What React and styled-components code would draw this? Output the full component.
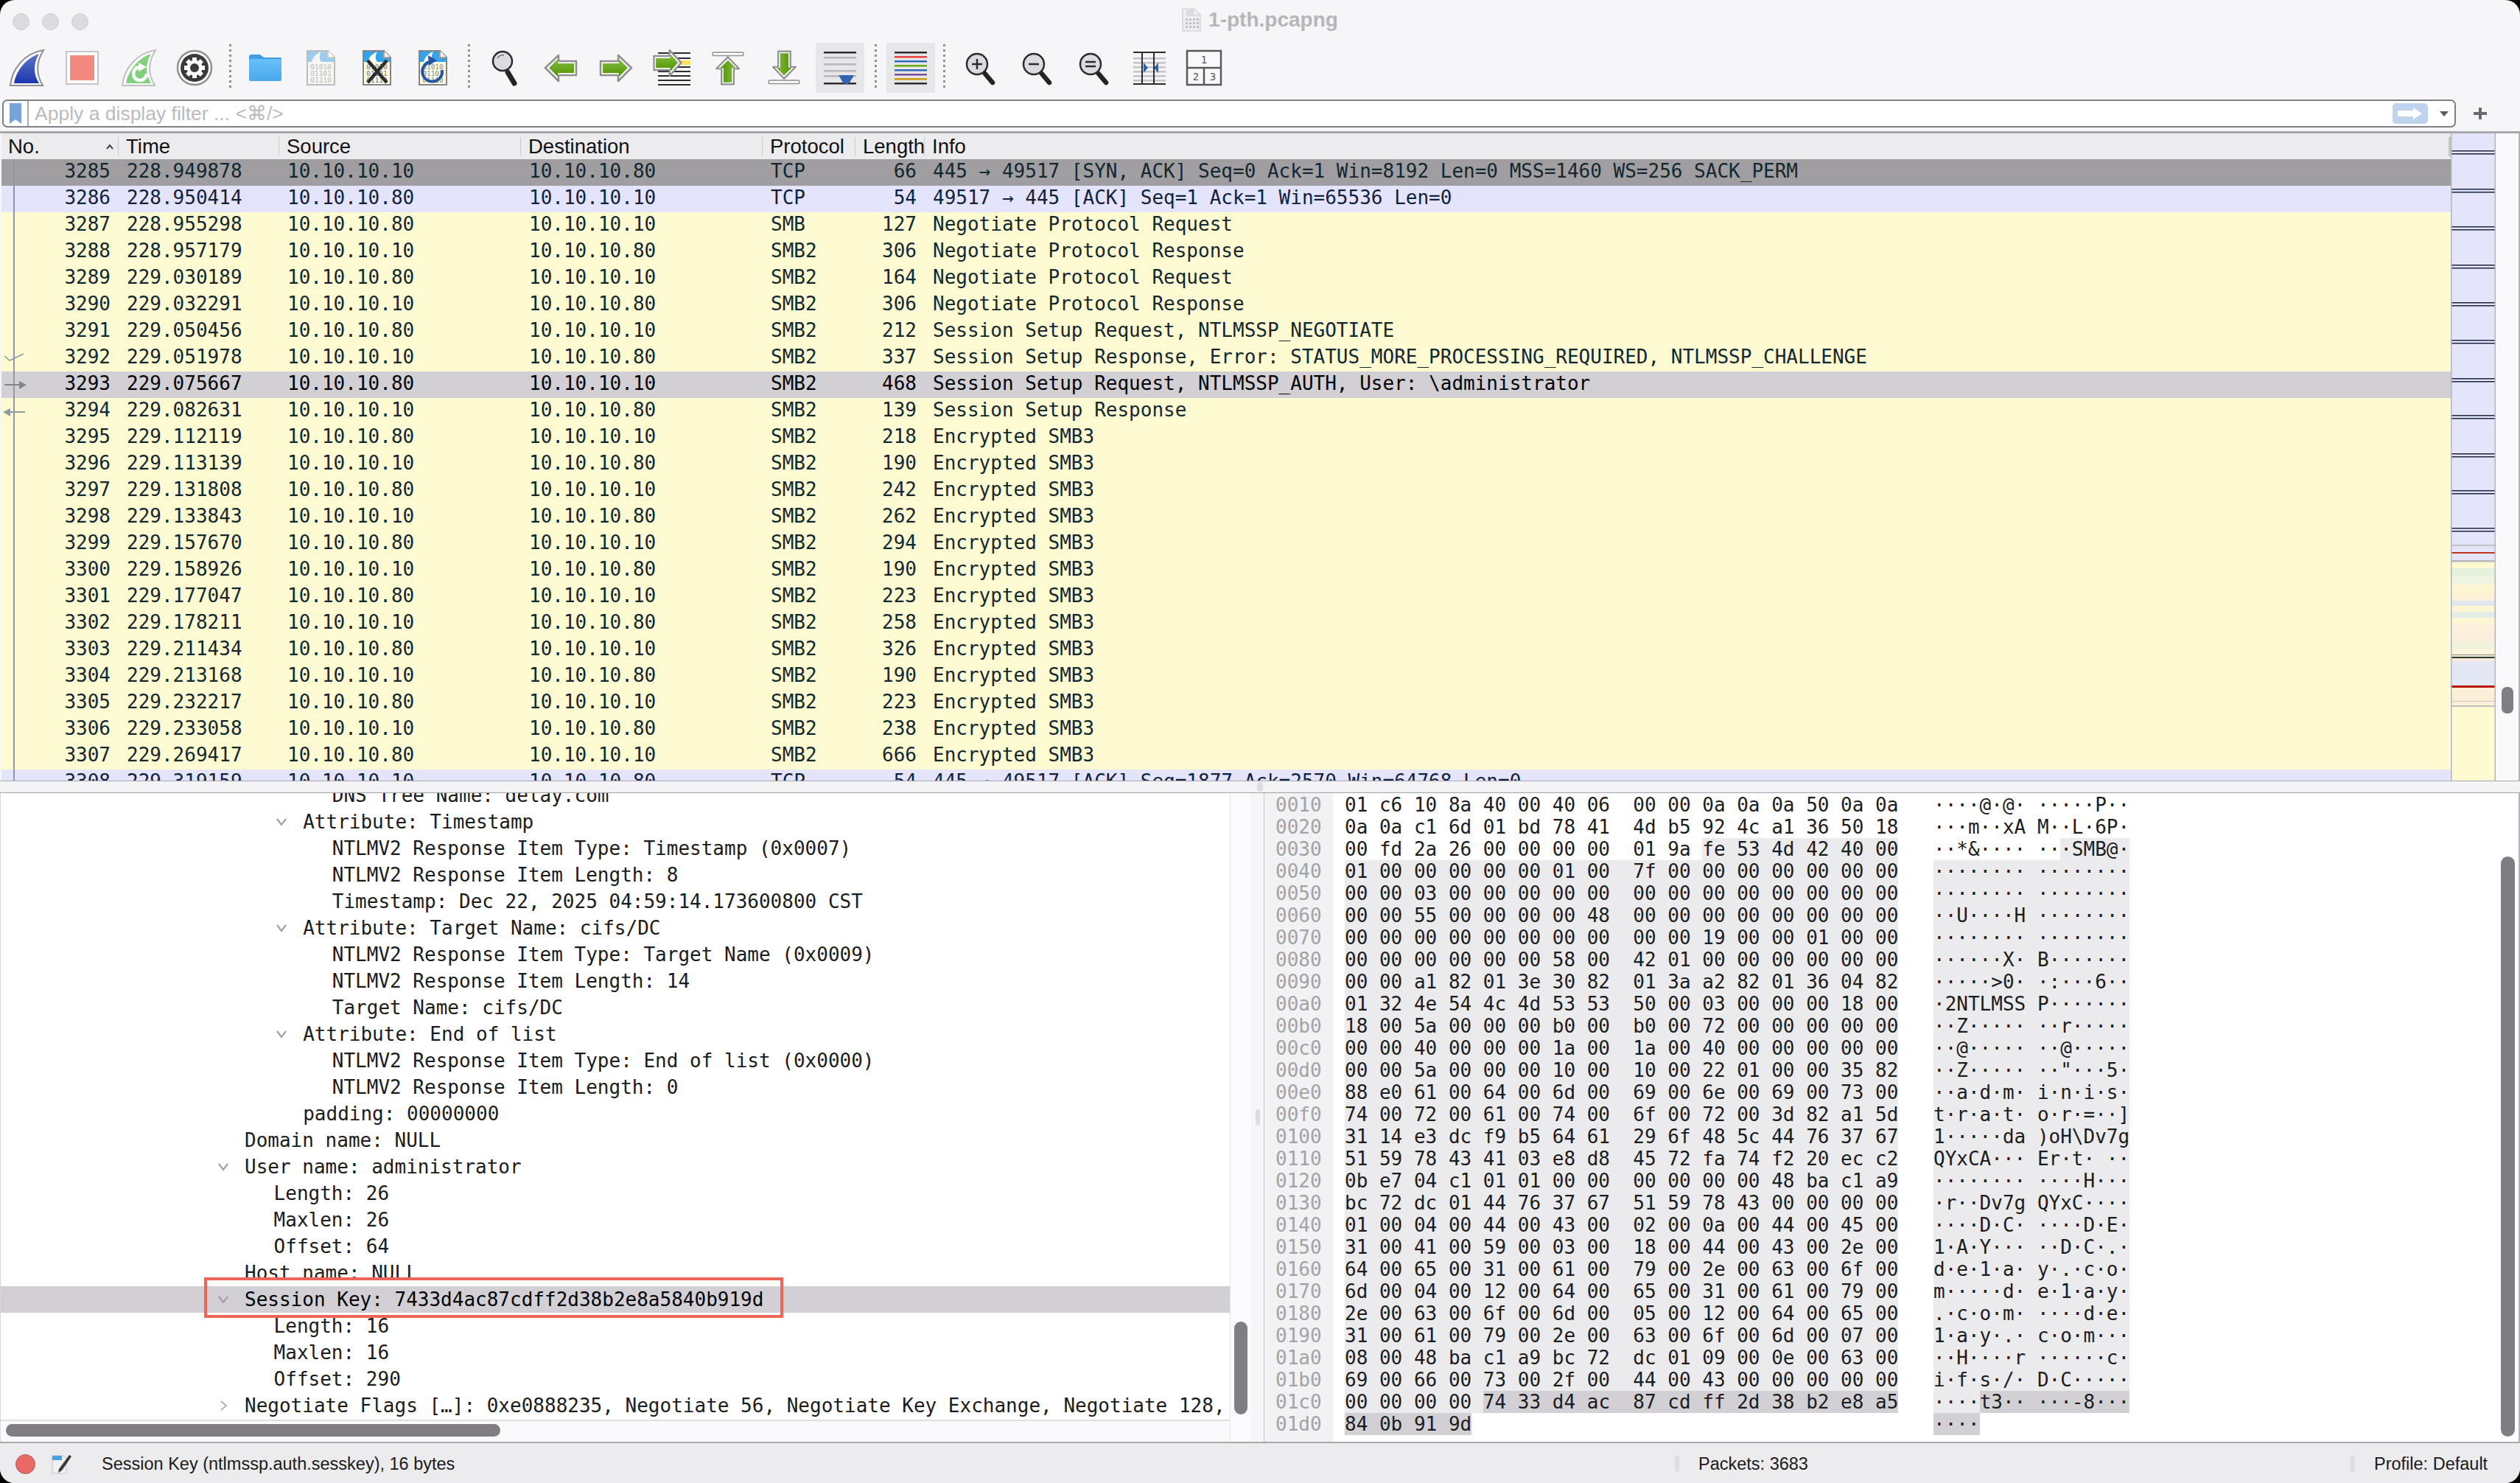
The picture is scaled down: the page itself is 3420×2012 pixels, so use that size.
import React from "react";
import styled, { createGlobalStyle } from "styled-components";

const MONO = '"DejaVu Sans Mono", "Liberation Mono", monospace';
const SANS = '"Liberation Sans", Arial, sans-serif';

const GlobalStyle = createGlobalStyle`
  html, body { margin: 0; padding: 0; background: #000; }
  body { width: 3420px; height: 2012px; overflow: hidden; }
`;

const Window = styled.div`
  position: relative;
  width: 3420px;
  height: 2012px;
  display: flex;
  flex-direction: column;
  background: #f6f5f8;
  border-radius: 20px;
  overflow: hidden;
  font-family: ${SANS};
`;

const TitleBar = styled.div`
  height: 58px;
  flex: none;
  display: grid;
  grid-template-columns: 1fr auto 1fr;
  align-items: center;
`;
const Lights = styled.div`
  display: flex;
  gap: 17px;
  padding-left: 17px;
`;
const Light = styled.span`
  width: 23px;
  height: 23px;
  border-radius: 50%;
  background: #dcdbdd;
  border: 1px solid #cfced1;
  box-sizing: border-box;
`;
const Title = styled.div`
  display: flex;
  align-items: center;
  gap: 10px;
  font-size: 28px;
  font-weight: bold;
  color: #b6b5b8;
  margin-top: -4px;
`;

const Toolbar = styled.div`
  height: 68px;
  flex: none;
  display: flex;
  gap: 10px;
  padding-left: 3px;
`;
const ToolSlot = styled.div`
  width: 66px;
  height: 68px;
  flex: none;
  background: ${(p) => (p.$active ? "#e7e6e9" : "transparent")};
  svg { display: block; }
`;
const ToolSep = styled.div`
  width: ${(p) => (p.$narrow ? "4px" : "10px")};
  flex: none;
  margin: 2px 0 4px;
  background: repeating-linear-gradient(#8f8e92 0 3px, transparent 3px 7px) center / 3px 100% no-repeat;
`;
const ZoomGroup = styled.div`
  display: flex;
  gap: 11px;
`;

const FilterRow = styled.div`
  height: 38px;
  flex: none;
  margin-top: 9px;
  padding-left: 3px;
  display: flex;
  align-items: center;
`;
const FilterBox = styled.div`
  width: 3330px;
  height: 38px;
  box-sizing: border-box;
  border: 2px solid #807f83;
  border-radius: 7px;
  background: #fff;
  display: flex;
  align-items: center;
`;
const BookmarkCell = styled.div`
  width: 34px;
  height: 100%;
  flex: none;
  box-sizing: border-box;
  border-right: 2px solid #a9a8ac;
  display: flex;
  align-items: center;
  justify-content: center;
`;
const Placeholder = styled.div`
  flex: 1;
  padding-left: 8px;
  font-size: 26.5px;
  color: #bbbabd;
`;
const ApplyButton = styled.div`
  width: 48px;
  height: 28px;
  border-radius: 5px;
  background: #bdd3ee;
  display: flex;
  align-items: center;
  justify-content: center;
`;
const DropArrow = styled.div`
  width: 0;
  height: 0;
  margin: 0 8px 0 16px;
  border-left: 6px solid transparent;
  border-right: 6px solid transparent;
  border-top: 7px solid #5b5a5e;
`;
const PlusCell = styled.div`
  width: 66px;
  display: flex;
  justify-content: center;
`;

const PacketPane = styled.div`
  margin-top: 5px;
  height: 882px;
  flex: none;
  box-sizing: border-box;
  border-top: 3px solid #a9a8ac;
  border-bottom: 1px solid #a9a8ac;
  border-right: 2px solid #b4b3b7;
  padding-left: 2px;
  display: flex;
`;
const PacketTable = styled.div`
  width: 3324px;
  flex: none;
  display: flex;
  flex-direction: column;
  overflow: hidden;
`;
const COLUMNS = "159px 218px 328px 328px 126px 94px 1fr";
const HeaderRow = styled.div`
  height: 35px;
  flex: none;
  display: grid;
  grid-template-columns: ${COLUMNS};
  background: #ecebed;
  font-size: 27.5px;
  color: #111;
`;
const HeaderCell = styled.div`
  line-height: 35px;
  padding-left: ${(p) => (p.$first ? "9px" : "10px")};
  padding-right: 6px;
  background: linear-gradient(#c9c8cc, #c9c8cc) right center / 1.5px 25px no-repeat;
  white-space: nowrap;
  overflow: ${(p) => (p.$clip ? "hidden" : "visible")};
  display: flex;
  justify-content: space-between;
  align-items: center;
  &:last-child { background: linear-gradient(#c5c4c7, #c5c4c7) right center / 3px 26px no-repeat; }
`;
const RowList = styled.div`
  position: relative;
  flex: 1;
  overflow: hidden;
`;
const ROW_BG = { gray: "#a09ea1", blue: "#e4e5fd", yellow: "#fefad2", selected: "#d2d0d5" };
const ROW_FG = { gray: "#12272e", blue: "#12213d", yellow: "#12272e", selected: "#000" };
const PacketRow = styled.div`
  height: 36px;
  display: grid;
  grid-template-columns: ${COLUMNS};
  line-height: 32px;
  font-family: ${MONO};
  font-size: 26px;
  white-space: pre;
  background: ${(p) => ROW_BG[p.$kind]};
  color: ${(p) => ROW_FG[p.$kind]};
`;
const Cell = styled.div`
  padding: 0 11px;
  text-align: ${(p) => (p.$right ? "right" : "left")};
`;
const RelationMarks = styled.svg`
  position: absolute;
  left: 0;
  top: 0;
`;
const MiniMap = styled.svg`
  width: 61px;
  height: 878px;
  flex: none;
  display: block;
`;
const SideTrack = styled.div`
  flex: 1;
  background: #faf9fc;
  padding: 751px 0 0 8px;
`;
const SideThumb = styled.div`
  width: 16px;
  height: 36px;
  border-radius: 7px;
  background: #807e82;
`;

const HSplitter = styled.div`
  height: 15px;
  flex: none;
  background: #f4f3f6;
  border-bottom: 1px solid #a3a2a6;
  display: flex;
  justify-content: center;
  align-items: center;
`;
const Grip = styled.span`
  width: ${(p) => (p.$small ? "6px" : "8px")};
  height: ${(p) => (p.$small ? "22px" : "13px")};
  border-radius: 4px;
  background: #dddce0;
`;

const LowerArea = styled.div`
  height: 880px;
  flex: none;
  display: flex;
`;
const DetailColumn = styled.div`
  width: 1669px;
  flex: none;
  display: flex;
  flex-direction: column;
  background: #fff;
  border-left: 1px solid #d8d7da;
  box-sizing: border-box;
`;
const DetailTree = styled.div`
  height: 850px;
  flex: none;
  overflow: hidden;
`;
const TreeScroll = styled.div`
  margin-top: -15px;
  font-family: ${MONO};
  font-size: 26px;
  color: #1b1b1b;
  white-space: pre;
`;
const TreeRow = styled.div`
  height: 36px;
  display: flex;
  align-items: center;
  padding-left: ${(p) => 292 + p.$level * 39.6}px;
  background: ${(p) => (p.$selected ? "#d2d0d5" : "transparent")};
  color: ${(p) => (p.$selected ? "#000" : "inherit")};
`;
const ChevronSlot = styled.span`
  width: 20px;
  margin-right: 19px;
  flex: none;
  display: flex;
  justify-content: center;
  align-items: center;
`;
const HScroll = styled.div`
  flex: 1;
  border-top: 2px solid #dfdee1;
  background: #faf9fb;
  padding: 4px 0 0 7px;
`;
const HThumb = styled.div`
  width: 671px;
  height: 17px;
  border-radius: 9px;
  background: #807e82;
`;
const VTrack = styled.div`
  width: 29px;
  flex: none;
  box-sizing: border-box;
  background: #fbfafc;
  border-left: 1px solid #e4e3e6;
  padding: 717px 0 0 5px;
`;
const VThumb = styled.div`
  width: 18px;
  height: 126px;
  border-radius: 9px;
  background: #807e82;
`;
const VSplitter = styled.div`
  width: 17px;
  flex: none;
  display: flex;
  align-items: center;
  justify-content: center;
`;

const BytesPane = styled.div`
  flex: 1;
  display: flex;
  background: #fff;
  border-left: 1px solid #c4c3c7;
  border-right: 2px solid #b4b3b7;
  font-family: ${MONO};
  font-size: 26px;
  line-height: 30px;
  white-space: pre;
  color: #1c1c1c;
`;
const Gutter = styled.div`
  width: 93px;
  flex: none;
  box-sizing: border-box;
  padding: 1px 0 0 15px;
  background: #f2f1f3;
  color: #a3a2a5;
`;
const HexColumn = styled.div`
  width: 815px;
  flex: none;
  box-sizing: border-box;
  padding: 1px 0 0 16px;
`;
const AsciiColumn = styled.div`
  flex: 1;
  padding-top: 1px;
`;
const ByteLine = styled.div`
  height: 30px;
`;
const ByteMark = styled.span`
  display: inline-block;
  height: 30px;
  background: ${(p) => (p.$level === 2 ? "#d2d0d5" : p.$level === 1 ? "#ebeaed" : "transparent")};
`;
const ByteScroll = styled.div`
  width: 30px;
  flex: none;
  box-sizing: border-box;
  padding: 86px 0 0 6px;
`;
const ByteThumb = styled.div`
  width: 19px;
  height: 787px;
  border-radius: 10px;
  background: #807e82;
`;

const StatusBar = styled.div`
  flex: 1;
  border-top: 2px solid #a9a8ac;
  background: #ecebed;
  display: flex;
  align-items: center;
  font-size: 23.5px;
  color: #1a1a1a;
  padding-left: 21px;
  padding-top: 2px;
`;
const StatusDot = styled.span`
  width: 27px;
  height: 27px;
  flex: none;
  box-sizing: border-box;
  border-radius: 50%;
  background: #e86a64;
  border: 1.5px solid #b4544e;
  margin-right: 22px;
`;
const StatusMessage = styled.span`
  width: 2135px;
  flex: none;
  margin-left: 40px;
`;
const StatusCell = styled.span`
  width: ${(p) => p.$width}px;
  flex: none;
  margin-left: 26px;
  white-space: nowrap;
`;

const Callout = styled.div`
  position: absolute;
  left: 277px;
  top: 1733px;
  width: 786px;
  height: 55px;
  box-sizing: border-box;
  border: 4px solid #f0655a;
`;

// packet list data
const enc = (no, time, even, len) => ({
  no, time, even, proto: "SMB2", len, info: "Encrypted SMB3",
});
const PACKETS = [
  { no: 3285, time: "228.949878", even: false, proto: "TCP", len: 66, info: "445 → 49517 [SYN, ACK] Seq=0 Ack=1 Win=8192 Len=0 MSS=1460 WS=256 SACK_PERM", kind: "gray" },
  { no: 3286, time: "228.950414", even: true, proto: "TCP", len: 54, info: "49517 → 445 [ACK] Seq=1 Ack=1 Win=65536 Len=0", kind: "blue" },
  { no: 3287, time: "228.955298", even: true, proto: "SMB", len: 127, info: "Negotiate Protocol Request" },
  { no: 3288, time: "228.957179", even: false, proto: "SMB2", len: 306, info: "Negotiate Protocol Response" },
  { no: 3289, time: "229.030189", even: true, proto: "SMB2", len: 164, info: "Negotiate Protocol Request" },
  { no: 3290, time: "229.032291", even: false, proto: "SMB2", len: 306, info: "Negotiate Protocol Response" },
  { no: 3291, time: "229.050456", even: true, proto: "SMB2", len: 212, info: "Session Setup Request, NTLMSSP_NEGOTIATE" },
  { no: 3292, time: "229.051978", even: false, proto: "SMB2", len: 337, info: "Session Setup Response, Error: STATUS_MORE_PROCESSING_REQUIRED, NTLMSSP_CHALLENGE" },
  { no: 3293, time: "229.075667", even: true, proto: "SMB2", len: 468, info: "Session Setup Request, NTLMSSP_AUTH, User: \\administrator", kind: "selected" },
  { no: 3294, time: "229.082631", even: false, proto: "SMB2", len: 139, info: "Session Setup Response" },
  enc(3295, "229.112119", true, 218),
  enc(3296, "229.113139", false, 190),
  enc(3297, "229.131808", true, 242),
  enc(3298, "229.133843", false, 262),
  enc(3299, "229.157670", true, 294),
  enc(3300, "229.158926", false, 190),
  enc(3301, "229.177047", true, 223),
  enc(3302, "229.178211", false, 258),
  enc(3303, "229.211434", true, 326),
  enc(3304, "229.213168", false, 190),
  enc(3305, "229.232217", true, 223),
  enc(3306, "229.233058", false, 238),
  enc(3307, "229.269417", true, 666),
  { no: 3308, time: "229.319159", even: false, proto: "TCP", len: 54, info: "445 → 49517 [ACK] Seq=1877 Ack=2570 Win=64768 Len=0", kind: "blue" },
];

const TREE = [
  [3, "DNS Tree Name: delay.com"],
  [2, "Attribute: Timestamp", "open"],
  [3, "NTLMV2 Response Item Type: Timestamp (0x0007)"],
  [3, "NTLMV2 Response Item Length: 8"],
  [3, "Timestamp: Dec 22, 2025 04:59:14.173600800 CST"],
  [2, "Attribute: Target Name: cifs/DC", "open"],
  [3, "NTLMV2 Response Item Type: Target Name (0x0009)"],
  [3, "NTLMV2 Response Item Length: 14"],
  [3, "Target Name: cifs/DC"],
  [2, "Attribute: End of list", "open"],
  [3, "NTLMV2 Response Item Type: End of list (0x0000)"],
  [3, "NTLMV2 Response Item Length: 0"],
  [2, "padding: 00000000"],
  [0, "Domain name: NULL"],
  [0, "User name: administrator", "open"],
  [1, "Length: 26"],
  [1, "Maxlen: 26"],
  [1, "Offset: 64"],
  [0, "Host name: NULL"],
  [0, "Session Key: 7433d4ac87cdff2d38b2e8a5840b919d", "open", true],
  [1, "Length: 16"],
  [1, "Maxlen: 16"],
  [1, "Offset: 290"],
  [0, "Negotiate Flags […]: 0xe0888235, Negotiate 56, Negotiate Key Exchange, Negotiate 128,", "closed"],
];

const HEX = `01 c6 10 8a 40 00 40 06 00 00 0a 0a 0a 50 0a 0a
0a 0a c1 6d 01 bd 78 41 4d b5 92 4c a1 36 50 18
00 fd 2a 26 00 00 00 00 01 9a fe 53 4d 42 40 00
01 00 00 00 00 00 01 00 7f 00 00 00 00 00 00 00
00 00 03 00 00 00 00 00 00 00 00 00 00 00 00 00
00 00 55 00 00 00 00 48 00 00 00 00 00 00 00 00
00 00 00 00 00 00 00 00 00 00 19 00 00 01 00 00
00 00 00 00 00 00 58 00 42 01 00 00 00 00 00 00
00 00 a1 82 01 3e 30 82 01 3a a2 82 01 36 04 82
01 32 4e 54 4c 4d 53 53 50 00 03 00 00 00 18 00
18 00 5a 00 00 00 b0 00 b0 00 72 00 00 00 00 00
00 00 40 00 00 00 1a 00 1a 00 40 00 00 00 00 00
00 00 5a 00 00 00 10 00 10 00 22 01 00 00 35 82
88 e0 61 00 64 00 6d 00 69 00 6e 00 69 00 73 00
74 00 72 00 61 00 74 00 6f 00 72 00 3d 82 a1 5d
31 14 e3 dc f9 b5 64 61 29 6f 48 5c 44 76 37 67
51 59 78 43 41 03 e8 d8 45 72 fa 74 f2 20 ec c2
0b e7 04 c1 01 01 00 00 00 00 00 00 48 ba c1 a9
bc 72 dc 01 44 76 37 67 51 59 78 43 00 00 00 00
01 00 04 00 44 00 43 00 02 00 0a 00 44 00 45 00
31 00 41 00 59 00 03 00 18 00 44 00 43 00 2e 00
64 00 65 00 31 00 61 00 79 00 2e 00 63 00 6f 00
6d 00 04 00 12 00 64 00 65 00 31 00 61 00 79 00
2e 00 63 00 6f 00 6d 00 05 00 12 00 64 00 65 00
31 00 61 00 79 00 2e 00 63 00 6f 00 6d 00 07 00
08 00 48 ba c1 a9 bc 72 dc 01 09 00 0e 00 63 00
69 00 66 00 73 00 2f 00 44 00 43 00 00 00 00 00
00 00 00 00 74 33 d4 ac 87 cd ff 2d 38 b2 e8 a5
84 0b 91 9d`.split("\n").map((l) => l.split(" "));

const levelOf = (offset) => (offset >= 0x1c4 ? 2 : offset >= 0x3a ? 1 : 0);

function toAscii(b) {
  const n = parseInt(b, 16);
  return n >= 32 && n < 127 ? String.fromCharCode(n) : "·";
}

// groups the bytes of one line in runs with the same highlight
function ByteRun({ bytes, line, format, sep }) {
  const runs = [];
  bytes.forEach((b, i) => {
    const level = levelOf((line + 1) * 16 + i);
    const tail = i === bytes.length - 1 ? "" : i === 7 ? sep + " " : sep;
    const text = format(b) + tail;
    const last = runs[runs.length - 1];
    if (last && last.level === level) last.text += text;
    else runs.push({ level, text });
  });
  return (
    <ByteLine>
      {runs.map((r, i) => (
        <ByteMark key={i} $level={r.level}>{r.text}</ByteMark>
      ))}
    </ByteLine>
  );
}

function Chevron({ open }) {
  return (
    <svg width="16" height="14" viewBox="0 0 16 14">
      {open ? (
        <path d="M2 3 L8 11 L14 3" fill="none" stroke="#a09fa3" strokeWidth="2.2" />
      ) : (
        <path d="M5 1 L12 7 L5 13" fill="none" stroke="#b5b4b8" strokeWidth="2.2" />
      )}
    </svg>
  );
}

const Svg = ({ children }) => (
  <svg width="66" height="68" viewBox="0 0 66 68">{children}</svg>
);

const FIN = "M11 58 C13 36 30 14 56 10 C46 26 46 43 55 58 Z";
const FIN_IN = "M16 55 C19 38 32 21 50 15 C42 28 42 43 50 55 Z";

const FinStart = () => (
  <Svg>
    <defs>
      <linearGradient id="finBlue" x1="0" y1="0" x2="0" y2="1">
        <stop offset="0" stopColor="#5d74c9" />
        <stop offset="1" stopColor="#1c38b0" />
      </linearGradient>
    </defs>
    <path d={FIN} fill="#fff" stroke="#8f8e92" strokeWidth="2" />
    <path d={FIN_IN} fill="url(#finBlue)" />
  </Svg>
);

const StopIcon = () => (
  <Svg>
    <rect x="11" y="12" width="43" height="44" fill="#fff" stroke="#c8c3c5" strokeWidth="2" />
    <rect x="16" y="17" width="33" height="34" fill="#f28a80" />
  </Svg>
);

const FinRestart = () => (
  <Svg>
    <path d={FIN} fill="#fff" stroke="#c0bfc2" strokeWidth="2" />
    <path d={FIN_IN} fill="#80d07c" />
    <path d="M35 33 A9 9 0 1 0 44 42" fill="none" stroke="#fff" strokeWidth="4.5" />
    <path d="M33 27 L44 33 L33 39 Z" fill="#fff" />
  </Svg>
);

const OptionsIcon = () => {
  const teeth = [0, 45, 90, 135, 180, 225, 270, 315];
  return (
    <Svg>
      <circle cx="33" cy="34" r="23" fill="#fff" stroke="#8f8e92" strokeWidth="2.5" />
      <circle cx="33" cy="34" r="19" fill="#3b393c" />
      <circle cx="33" cy="34" r="10.5" fill="#fff" />
      {teeth.map((a) => (
        <rect key={a} x="30" y="20" width="6" height="6" fill="#fff" transform={`rotate(${a} 33 34)`} />
      ))}
      <circle cx="33" cy="34" r="6" fill="#3b393c" />
    </Svg>
  );
};

const FolderIcon = () => (
  <Svg>
    <defs>
      <linearGradient id="folderBlue" x1="0" y1="0" x2="0" y2="1">
        <stop offset="0" stopColor="#68c0f8" />
        <stop offset="1" stopColor="#4aa8ec" />
      </linearGradient>
    </defs>
    <path d="M11 19 Q11 16 14 16 L26 16 L31 20 L53 20 Q55 20 55 23 L55 28 L11 28 Z" fill="#3f9fe6" />
    <rect x="11" y="22" width="44" height="30" rx="2" fill="url(#folderBlue)" />
  </Svg>
);

function DocIcon({ border, fill, top, finFill, digits, children }) {
  return (
    <Svg>
      <path d="M14 11 L42 11 L51 20 L51 57 L14 57 Z" fill={fill} stroke={border} strokeWidth="2" />
      <path d="M15 12 L41 12 L41 21 L50 21 L50 26 L15 26 Z" fill={top} />
      <path d="M20 26 C22 18 28 14 33 12 C30 17 30 22 33 26 Z" fill={finFill} />
      <path d="M42 11 L42 20 L51 20" fill="#fff" stroke={border} strokeWidth="1.5" />
      <g fontFamily={MONO} fontSize="9.5" fill={digits} textAnchor="middle">
        <text x="32.5" y="36">01010</text>
        <text x="32.5" y="45">01101</text>
        <text x="32.5" y="54">01110</text>
      </g>
      {children}
    </Svg>
  );
}

const ArrowShape = ({ transform, id }) => (
  <g transform={transform}>
    <defs>
      <linearGradient id={id} x1="0" y1="0" x2="0" y2="1">
        <stop offset="0" stopColor="#86bb45" />
        <stop offset="1" stopColor="#4f9400" />
      </linearGradient>
    </defs>
    <path d="M13 34 L31 17 L31 25 L55 25 L55 44 L31 44 L31 52 Z" fill="#fff" stroke="#8f8e92" strokeWidth="2.5" strokeLinejoin="round" />
    <path d="M18 34 L30 22 L30 28 L52 28 L52 41 L30 41 L30 46 Z" fill={`url(#${id})`} />
  </g>
);

const FindIcon = () => (
  <Svg>
    <line x1="38" y1="40" x2="47" y2="55" stroke="#242325" strokeWidth="7" strokeLinecap="round" />
    <circle cx="31" cy="25" r="13" fill="#dcdbe0" stroke="#2b2a2c" strokeWidth="2.5" />
    <path d="M24 21 Q27 16 33 17" fill="none" stroke="#77767a" strokeWidth="1.5" />
  </Svg>
);

const GoPacketIcon = () => (
  <Svg>
    {[14, 21, 33, 39, 45, 51, 57].map((y) => (
      <rect key={y} x="14" y={y - 1} width="44" height="2" fill="#2c2b2d" />
    ))}
    <rect x="14" y="24" width="44" height="6" fill="#fde25d" />
    <ArrowShape id="arrowGo" transform="translate(56 0) scale(-0.88 1) translate(-1 -7)" />
  </Svg>
);

const LineStack = ({ colors }) => (
  <>
    {colors.map(([y, c]) => (
      <rect key={y} x="11" y={y - 1} width="44" height="2.5" fill={c} />
    ))}
  </>
);

const AutoScrollIcon = () => (
  <Svg>
    <LineStack colors={[[13, "#2c2b2d"], [20, "#b7b6ba"], [29, "#b7b6ba"], [38, "#b7b6ba"], [45, "#b7b6ba"], [55, "#2c2b2d"]]} />
    <path d="M31 44 L52 44 L46 54 Q42 58 37 54 Z" fill="#2f63ae" />
  </Svg>
);

const ColorizeIcon = () => (
  <Svg>
    <LineStack colors={[[13, "#2c2b2d"], [19, "#e8413a"], [25, "#2f6bb5"], [31, "#6aa80e"], [37, "#2f6bb5"], [43, "#7a4f96"], [49, "#c99a0a"], [55, "#2c2b2d"]]} />
  </Svg>
);

function ZoomIcon({ children }) {
  return (
    <Svg>
      <line x1="43" y1="41" x2="54" y2="54" stroke="#242325" strokeWidth="6.5" strokeLinecap="round" />
      <circle cx="33" cy="29" r="14" fill="#dcdbe0" stroke="#2b2a2c" strokeWidth="2.5" />
      {children}
    </Svg>
  );
}

const ResizeIcon = () => (
  <Svg>
    {[20, 26, 32, 38, 44, 50].map((y) => (
      <rect key={y} x="14" y={y} width="44" height="2.5" fill="#c4c3c7" />
    ))}
    <rect x="14" y="12" width="44" height="2" fill="#2c2b2d" />
    <rect x="14" y="55" width="44" height="2" fill="#2c2b2d" />
    <rect x="25" y="12" width="2" height="45" fill="#2c2b2d" />
    <rect x="41" y="12" width="2" height="45" fill="#2c2b2d" />
    <path d="M28 27 L34 34 L28 41 Z" fill="#2f63ae" />
    <path d="M48 27 L42 34 L48 41 Z" fill="#2f63ae" />
  </Svg>
);

const LayoutIcon = () => (
  <Svg>
    <rect x="10" y="11" width="46" height="46" fill="#f9f8fb" stroke="#59585c" strokeWidth="2.5" />
    <line x1="10" y1="34" x2="56" y2="34" stroke="#59585c" strokeWidth="2.5" />
    <line x1="33" y1="34" x2="33" y2="57" stroke="#59585c" strokeWidth="2.5" />
    <g fontFamily={MONO} fontSize="14" fill="#59585c" textAnchor="middle">
      <text x="33" y="28">1</text>
      <text x="22" y="51">2</text>
      <text x="45" y="51">3</text>
    </g>
  </Svg>
);

const TitleFile = () => (
  <svg width="26" height="32" viewBox="0 0 26 32">
    <path d="M1 1 L17 1 L25 9 L25 31 L1 31 Z" fill="#eeedf0" stroke="#d6d5d8" strokeWidth="1.5" />
    <path d="M6 1 L16 1 L16 9 L25 9 L25 11 L6 11 Z" fill="#dcdbde" />
    <g fill="#c0bfc2">
      {[14, 19, 24].map((y) => [5, 10, 15, 20].map((x) => (
        <rect key={`${x}-${y}`} x={x} y={y} width="3" height="3" />
      )))}
    </g>
  </svg>
);

// packet overview on the right of the list, drawn at scale
const MAP_DOUBLE = [23, 75, 126, 178, 229, 280, 332, 382, 434, 484, 535];
const MAP_BANDS = [
  [590, 10, "#e4f1dc"], [600, 12, "#eef3e2"], [612, 14, "#fdf5d2"], [626, 8, "#fdf0d8"],
  [634, 7, "#dfe7ee"], [641, 8, "#fdf6d4"], [649, 8, "#e4ecea"], [657, 8, "#fdf6d4"],
  [665, 12, "#fdf0dc"], [677, 12, "#fbeedd"], [689, 10, "#eff3dc"], [699, 10, "#fcf4da"],
  [709, 7, "#fde9d8"],
];

const MapChart = () => (
  <MiniMap viewBox="0 0 61 878">
    <rect width="61" height="878" fill="#e4e5fb" />
    <rect y="581" width="61" height="297" fill="#fefad2" />
    {MAP_BANDS.map(([y, h, c]) => <rect key={y} y={y} width="61" height={h} fill={c} />)}
    <rect y="716" width="61" height="34" fill="#e4e8f4" />
    <rect y="750" width="61" height="26" fill="#fdeed8" />
    {MAP_DOUBLE.map((y) => (
      <g key={y}>
        <rect y={y} width="61" height="1.5" fill="#1c2540" />
        <rect y={y + 4} width="61" height="1.5" fill="#1c2540" />
      </g>
    ))}
    <rect y="558" width="61" height="1.5" fill="#b7b6ba" />
    <rect y="568" width="61" height="2" fill="#c03020" />
    <rect y="579" width="61" height="2.5" fill="#b7b6ba" />
    <rect y="707" width="61" height="1" fill="#7a8a80" />
    <rect y="710" width="61" height="2" fill="#1e3c30" />
    <rect y="749" width="61" height="3" fill="#b8140a" />
    <rect y="770" width="61" height="1" fill="#c8c7cb" />
    <rect y="776" width="61" height="2" fill="#c0bfc3" />
    <rect width="1.5" height="878" fill="#b5b4b8" />
    <rect x="59.5" width="1.5" height="878" fill="#b5b4b8" />
  </MiniMap>
);

export default function App() {
  return (
    <Window>
      <GlobalStyle />
      <TitleBar>
        <Lights>
          <Light />
          <Light />
          <Light />
        </Lights>
        <Title>
          <TitleFile />
          1-pth.pcapng
        </Title>
        <span />
      </TitleBar>

      <Toolbar>
        <ToolSlot><FinStart /></ToolSlot>
        <ToolSlot><StopIcon /></ToolSlot>
        <ToolSlot><FinRestart /></ToolSlot>
        <ToolSlot><OptionsIcon /></ToolSlot>
        <ToolSep />
        <ToolSlot><FolderIcon /></ToolSlot>
        <ToolSlot>
          <DocIcon border="#bdbcbf" fill="#f7f6f0" top="#9ccdf0" finFill="#f7f6f0" digits="#bcbbbd" />
        </ToolSlot>
        <ToolSlot>
          <DocIcon border="#858488" fill="#fdfbe2" top="#35a3e8" finFill="#fff" digits="#77767a">
            <path d="M20 24 L46 54 M46 24 L20 54" stroke="#2d2c2e" strokeWidth="4.5" />
          </DocIcon>
        </ToolSlot>
        <ToolSlot>
          <DocIcon border="#858488" fill="#fdfbe2" top="#35a3e8" finFill="#fff" digits="#8a898d">
            <path d="M28 26 A13.5 13.5 0 1 0 45 37" fill="none" stroke="#24569f" strokeWidth="4" />
            <path d="M26 17 L38 24 L27 31 Z" fill="#24569f" />
          </DocIcon>
        </ToolSlot>
        <ToolSep />
        <ToolSlot><FindIcon /></ToolSlot>
        <ToolSlot><Svg><ArrowShape id="arrowPrev" /></Svg></ToolSlot>
        <ToolSlot><Svg><ArrowShape id="arrowNext" transform="translate(67 0) scale(-1 1)" /></Svg></ToolSlot>
        <ToolSlot><GoPacketIcon /></ToolSlot>
        <ToolSlot>
          <Svg>
            <rect x="12" y="13" width="42" height="4.5" rx="2" fill="#fff" stroke="#8f8e92" strokeWidth="1.5" />
            <ArrowShape id="arrowFirst" transform="translate(33 37) scale(0.88) rotate(90) translate(-33 -34)" />
          </Svg>
        </ToolSlot>
        <ToolSlot>
          <Svg>
            <rect x="12" y="51" width="42" height="4.5" rx="2" fill="#fff" stroke="#8f8e92" strokeWidth="1.5" />
            <ArrowShape id="arrowLast" transform="translate(33 31) scale(0.88) rotate(-90) translate(-33 -34)" />
          </Svg>
        </ToolSlot>
        <ToolSlot $active><AutoScrollIcon /></ToolSlot>
        <ToolSep />
        <ToolSlot $active><ColorizeIcon /></ToolSlot>
        <ToolSep $narrow />
        <ZoomGroup>
          <ToolSlot>
            <ZoomIcon>
              <path d="M26 29 L40 29 M33 22 L33 36" stroke="#2b2a2c" strokeWidth="2.5" />
            </ZoomIcon>
          </ToolSlot>
          <ToolSlot>
            <ZoomIcon>
              <path d="M26 29 L40 29" stroke="#2b2a2c" strokeWidth="2.5" />
            </ZoomIcon>
          </ToolSlot>
          <ToolSlot>
            <ZoomIcon>
              <path d="M26 26 L40 26 M26 32 L40 32" stroke="#2b2a2c" strokeWidth="2.5" />
            </ZoomIcon>
          </ToolSlot>
          <ToolSlot><ResizeIcon /></ToolSlot>
          <ToolSlot><LayoutIcon /></ToolSlot>
        </ZoomGroup>
      </Toolbar>

      <FilterRow>
        <FilterBox>
          <BookmarkCell>
            <svg width="16" height="28" viewBox="0 0 16 28">
              <path d="M0 0 L16 0 L16 28 L8 22 L0 28 Z" fill="#76a5dc" />
            </svg>
          </BookmarkCell>
          <Placeholder>Apply a display filter ... &lt;⌘/&gt;</Placeholder>
          <ApplyButton>
            <svg width="34" height="18" viewBox="0 0 34 18">
              <path d="M0 5 L21 5 L21 1 L33 9 L21 17 L21 13 L0 13 Z" fill="#fff" />
            </svg>
          </ApplyButton>
          <DropArrow />
        </FilterBox>
        <PlusCell>
          <svg width="18" height="18" viewBox="0 0 18 18">
            <path d="M0 9 L18 9 M9 1 L9 17" stroke="#6a696d" strokeWidth="4" />
          </svg>
        </PlusCell>
      </FilterRow>

      <PacketPane>
        <PacketTable>
          <HeaderRow>
            <HeaderCell $first>
              No.
              <svg width="12" height="10" viewBox="0 0 12 10">
                <path d="M2 8 L6 3 L10 8" fill="none" stroke="#333" strokeWidth="2" />
              </svg>
            </HeaderCell>
            <HeaderCell>Time</HeaderCell>
            <HeaderCell>Source</HeaderCell>
            <HeaderCell>Destination</HeaderCell>
            <HeaderCell>Protocol</HeaderCell>
            <HeaderCell $clip>Length</HeaderCell>
            <HeaderCell>Info</HeaderCell>
          </HeaderRow>
          <RowList>
            {PACKETS.map((p) => (
              <PacketRow key={p.no} $kind={p.kind || "yellow"}>
                <Cell $right>{p.no}</Cell>
                <Cell>{p.time}</Cell>
                <Cell>{p.even ? "10.10.10.80" : "10.10.10.10"}</Cell>
                <Cell>{p.even ? "10.10.10.10" : "10.10.10.80"}</Cell>
                <Cell>{p.proto}</Cell>
                <Cell $right>{p.len}</Cell>
                <Cell>{p.info}</Cell>
              </PacketRow>
            ))}
            <RelationMarks width="40" height="844" viewBox="0 0 40 844">
              <rect x="16" y="0" width="2" height="844" fill="#8e99a8" />
              <path d="M4 267 L11 273 L30 264" fill="none" stroke="#8e99a8" strokeWidth="1.5" />
              <path d="M4 306 L24 306" stroke="#858488" strokeWidth="2" />
              <path d="M24 301 L34 306 L24 312 Z" fill="#858488" />
              <path d="M12 343 L32 343" stroke="#8e99a8" strokeWidth="2" />
              <path d="M12 338 L2 343 L12 349 Z" fill="#8e99a8" />
            </RelationMarks>
          </RowList>
        </PacketTable>
        <MapChart />
        <SideTrack>
          <SideThumb />
        </SideTrack>
      </PacketPane>

      <HSplitter><Grip /></HSplitter>

      <LowerArea>
        <DetailColumn>
          <DetailTree>
            <TreeScroll>
              {TREE.map(([level, text, fold, selected], i) => (
                <TreeRow key={i} $level={level} $selected={selected}>
                  <ChevronSlot>{fold && <Chevron open={fold === "open"} />}</ChevronSlot>
                  {text}
                </TreeRow>
              ))}
            </TreeScroll>
          </DetailTree>
          <HScroll>
            <HThumb />
          </HScroll>
        </DetailColumn>
        <VTrack>
          <VThumb />
        </VTrack>
        <VSplitter><Grip $small /></VSplitter>
        <BytesPane>
          <Gutter>
            {HEX.map((_, i) => (
              <ByteLine key={i}>{((i + 1) * 16).toString(16).padStart(4, "0")}</ByteLine>
            ))}
          </Gutter>
          <HexColumn>
            {HEX.map((bytes, i) => (
              <ByteRun key={i} bytes={bytes} line={i} format={(b) => b} sep=" " />
            ))}
          </HexColumn>
          <AsciiColumn>
            {HEX.map((bytes, i) => (
              <ByteRun key={i} bytes={bytes} line={i} format={toAscii} sep="" />
            ))}
          </AsciiColumn>
          <ByteScroll>
            <ByteThumb />
          </ByteScroll>
        </BytesPane>
      </LowerArea>

      <StatusBar>
        <StatusDot />
        <svg width="28" height="28" viewBox="0 0 28 28">
          <path d="M1 3 L16 3 L20 7 L20 27 L1 27 Z" fill="#f1f0f0" stroke="#c4c3c7" />
          <path d="M1 3 L14 3 L14 9 L1 9 Z" fill="#45a3e6" />
          <path d="M10 21 L24 2 L27 4 L14 23 L9 26 Z" fill="#3a393c" />
        </svg>
        <StatusMessage>Session Key (ntlmssp.auth.sesskey), 16 bytes</StatusMessage>
        <Grip $small />
        <StatusCell $width={885}>Packets: 3683</StatusCell>
        <Grip $small />
        <StatusCell $width={160}>Profile: Default</StatusCell>
      </StatusBar>

      <Callout />
    </Window>
  );
}
